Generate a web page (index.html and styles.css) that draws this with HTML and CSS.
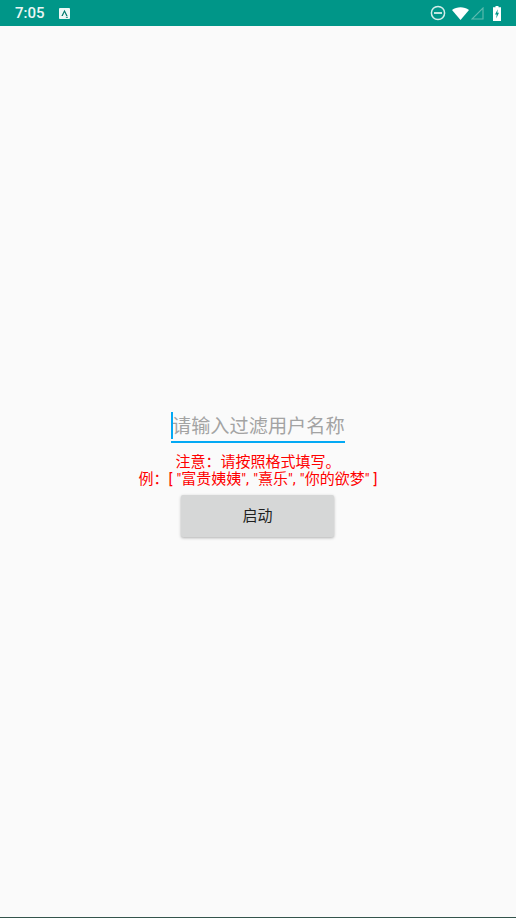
FILE: index.html
```html
<!DOCTYPE html>
<html>
<head>
    <meta charset="UTF-8">
    <meta name="viewport" content="width=device-width, initial-scale=1.0">
    <title>启动</title>
    <link rel="stylesheet" href="styles.css">
</head>
<body>
    <div class="status-bar">
        <div class="status-left">
            <span class="clock">7:05</span>
            <svg class="app-icon" width="11" height="11" viewBox="0 0 12 12">
                <rect x="0" y="0" width="12" height="12" rx="1" fill="#eef8f6"/>
                <path d="M6 1.8 L9.4 8.6 H7.9 L6 4.6 L4.1 8.6 H2.6 Z" fill="#00796b"/>
                <rect x="7.5" y="9.6" width="2.2" height="1" fill="#00796b"/>
            </svg>
        </div>
        <div class="status-right">
            <svg width="16" height="16" viewBox="0 0 16 16">
                <circle cx="8" cy="8" r="6.6" fill="none" stroke="#d5eeea" stroke-width="1.5"/>
                <rect x="4" y="7.1" width="8" height="1.8" fill="#d5eeea"/>
            </svg>
            <svg class="wifi" width="17" height="13" viewBox="0 0 17 13">
                <path d="M0 3 C4.8 -0.8 12.2 -0.8 17 3 L8.5 13 Z" fill="#fff"/>
            </svg>
            <svg class="signal" width="13" height="13" viewBox="0 0 13 13">
                <path d="M12 1 V12 H1 Z" fill="none" stroke="#5fbcb0" stroke-width="1.1"/>
            </svg>
            <svg class="battery" width="8" height="15" viewBox="0 0 8 15">
                <path d="M2.5 0 H5.5 V1.2 H8 V15 H0 V1.2 H2.5 Z" fill="#fff"/>
                <path d="M4.8 3.2 L2 8.5 H3.7 L3.2 12.4 L6 6.8 H4.3 Z" fill="#009688"/>
            </svg>
        </div>
    </div>

    <div class="content">
        <div class="name-input">
            <span class="caret"></span>
            <span class="placeholder">请输入过滤用户名称</span>
        </div>
        <div class="notice">
            <div>注意：请按照格式填写。</div>
            <div class="notice-example">例：[ "富贵姨姨", "熹乐", "你的欲梦" ]</div>
        </div>
        <button class="start-button">启动</button>
    </div>
</body>
</html>
```

FILE: styles.css
```css
* {
    margin: 0;
    padding: 0;
    box-sizing: border-box;
}

html, body {
    height: 100%;
}

body {
    display: flex;
    flex-direction: column;
    font-family: Roboto, "Noto Sans CJK SC", sans-serif;
    background: #fafafa;
    border-bottom: 1px solid #33544c;
    overflow: hidden;
}

.status-bar {
    height: 26px;
    flex: none;
    display: flex;
    justify-content: space-between;
    align-items: center;
    padding: 0 15px;
    background: #009688;
    color: #fff;
}

.status-left {
    display: flex;
    align-items: center;
    gap: 14px;
}

.clock {
    font-size: 15px;
    font-weight: 500;
    color: #eaf6f4;
}

.status-right {
    display: flex;
    align-items: center;
}

.wifi {
    margin-left: 6px;
}

.signal {
    margin-left: 2px;
}

.battery {
    margin-left: 9px;
}

.content {
    flex: 1;
    display: flex;
    flex-direction: column;
    align-items: center;
    padding-top: 386px;
}

.name-input {
    width: 174px;
    height: 31px;
    display: flex;
    align-items: center;
    position: relative;
    border-bottom: 2px solid #03a9f4;
}

.caret {
    position: absolute;
    left: 0;
    top: 0;
    width: 2px;
    height: 27px;
    background: #03a9f4;
}

.placeholder {
    font-size: 19.2px;
    line-height: 26px;
    color: #a3a3a3;
    white-space: nowrap;
    margin-left: 1px;
}

.notice {
    margin-top: 11px;
    font-size: 15px;
    line-height: 17px;
    color: #ff0000;
    text-align: center;
    white-space: nowrap;
}

.notice-example {
    word-spacing: 0.4px;
}

.start-button {
    width: 153px;
    height: 42px;
    margin-top: 7px;
    margin-right: 1px;
    padding-bottom: 3px;
    border: none;
    border-radius: 2px;
    background: #d6d7d7;
    color: #1f1f1f;
    font-family: inherit;
    font-size: 15px;
    box-shadow: 0 1px 3px rgba(0, 0, 0, 0.3);
}
```
